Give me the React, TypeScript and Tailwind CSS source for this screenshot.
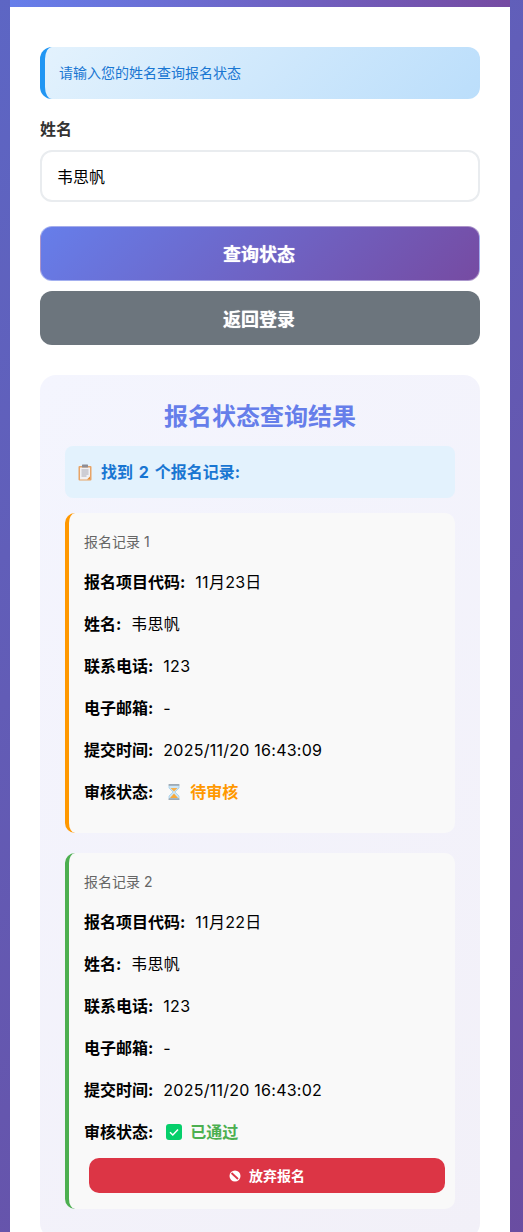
const font = "[font-family:'Inter','Noto_Sans_CJK_SC',sans-serif]";

function Clipboard() {
  return (
    <svg width="16" height="17" viewBox="0 0 16 17" className="shrink-0">
      <rect x="1.5" y="2" width="13" height="14.5" rx="1" fill="#e8a467" />
      <path d="M3 3.5h10v12h-7.5L3 15.5z" fill="#f1f1f3" />
      <path d="M13 12.5v3h-3z" fill="#e58a2e" />
      <rect x="5" y="0.5" width="6" height="3" rx="0.5" fill="#8d8d95" />
      <path d="M4.5 6h7M4.5 8h7M4.5 10h7M4.5 12h5" stroke="#a9a9b4" strokeWidth="1" />
    </svg>
  );
}

function Hourglass() {
  return (
    <svg width="16" height="18" viewBox="0 0 16 18" className="shrink-0">
      <path d="M3 2.5h10v2.5L9 9l4 4v2.5H3V13l4-4-4-4z" fill="#cde6f7" stroke="#a6cfe8" strokeWidth="0.8" />
      <path d="M4.5 5h7L8 8.6z" fill="#f8b04a" />
      <path d="M8 10.5l4 4.5H4z" fill="#f7a93b" />
      <rect x="2.5" y="1" width="11" height="1.8" rx="0.6" fill="#9eaab5" />
      <rect x="2.5" y="15.2" width="11" height="1.8" rx="0.6" fill="#9eaab5" />
    </svg>
  );
}

function CheckBox() {
  return (
    <svg width="16" height="16" viewBox="0 0 16 16" className="shrink-0">
      <rect width="16" height="16" rx="3" fill="#06cf6b" />
      <path d="M4 8.3l2.8 2.7L12 5.6" fill="none" stroke="#fff" strokeWidth="1.5" />
    </svg>
  );
}

function NoEntry() {
  return (
    <svg width="12" height="12" viewBox="0 0 12 12" className="shrink-0">
      <circle cx="6" cy="6" r="5.5" fill="#fff" />
      <path d="M2.5 3l6.5 6" stroke="#dc3545" strokeWidth="1.8" />
    </svg>
  );
}

function Row({ label, children }: { label: string; children: React.ReactNode }) {
  return (
    <div className="h-[42px] flex items-center text-[16px] text-black">
      <span className="font-bold">{label}</span>
      <span className="ml-[10px] flex items-center tracking-[0.25px]">{children}</span>
    </div>
  );
}

function Common({ code, time, name }: { code: string; time: string; name: string }) {
  return (
    <>
      <Row label="报名项目代码:">{code}</Row>
      <Row label="姓名:">{name}</Row>
      <Row label="联系电话:">123</Row>
      <Row label="电子邮箱:">-</Row>
      <Row label="提交时间:">{time}</Row>
    </>
  );
}

export default function App() {
  return (
    <div className={`${font} min-h-[1300px] pl-[10px] bg-[linear-gradient(135deg,#5d66c4_0%,#6a4ca0_100%)]`}>
      <div className="w-[500px] bg-white">
        <div className="h-[7px] bg-[linear-gradient(90deg,#667eea,#764ba2)]" />
        <div className="px-[30px] pt-[40px] pb-[30px]">
          <div className="h-[52px] flex items-center pl-[15px] pb-[2px] rounded-[12px] border-l-[5px] border-[#2196f3] bg-[linear-gradient(135deg,#e3f2fd,#bbdefb)] text-[14px] text-[#1976d2]">
            <span className="-ml-[1px]">请输入您的姓名查询报名状态</span>
          </div>
          <div className="mt-[18px] h-[24px] flex items-center text-[16px] font-semibold leading-none text-[#333]">姓名</div>
          <input
            readOnly
            value="韦思帆"
            className="mt-[9px] block w-full h-[52px] px-[15px] rounded-[12px] border-2 border-[#e9ecef] bg-white text-[16px] text-black outline-none"
          />
          <button className="mt-[24px] block w-full h-[55px] pt-[2px] pr-[2px] rounded-[12px] border border-white/40 bg-[linear-gradient(135deg,#667eea,#764ba2)] text-[18px] font-bold text-white [text-shadow:0_0_1px_rgba(255,255,255,0.8)]">
            查询状态
          </button>
          <button className="mt-[10px] block w-full h-[54px] pt-[2px] pr-[2px] rounded-[12px] bg-[#6c757d] text-[18px] font-bold text-white [text-shadow:0_0_1px_rgba(255,255,255,0.8)]">
            返回登录
          </button>

          <div className="mt-[30px] rounded-[16px] px-[25px] pt-[25px] pb-[30px] bg-[linear-gradient(135deg,#f4f5fe,#f2f0f8)]">
            <h2 className="h-[34px] flex items-center justify-center text-[24px] font-bold text-[#667eea]">报名状态查询结果</h2>
            <div className="mt-[12px] h-[52px] flex items-center gap-[8px] pl-[12px] rounded-[8px] bg-[#e3f2fd] text-[16px] font-bold text-[#1976d2] [word-spacing:2px]">
              <Clipboard />
              <span>找到 2 个报名记录:</span>
            </div>

            <div className="mt-[15px] h-[320px] rounded-[10px] border-l-4 border-[#ff9800] bg-[#f9f9f9] pl-[15px] pr-[10px] pt-[16px]">
              <div className="h-[25px] flex items-center text-[14px] text-[#666]">报名记录 1</div>
              <div className="mt-[7px]">
                <Common code="11月23日" name="韦思帆" time="2025/11/20 16:43:09" />
                <div className="h-[42px] flex items-center text-[16px] text-black">
                  <span className="font-bold">审核状态:</span>
                  <span className="ml-[13px] flex items-center gap-[8px] font-bold text-[#ff9800]">
                    <Hourglass />
                    待审核
                  </span>
                </div>
              </div>
            </div>

            <div className="mt-[20px] h-[356px] rounded-[10px] border-l-4 border-[#4caf50] bg-[#f9f9f9] pl-[15px] pr-[10px] pt-[16px]">
              <div className="h-[25px] flex items-center text-[14px] text-[#666]">报名记录 2</div>
              <div className="mt-[7px]">
                <Common code="11月22日" name="韦思帆" time="2025/11/20 16:43:02" />
                <div className="h-[42px] flex items-center text-[16px] text-black">
                  <span className="font-bold">审核状态:</span>
                  <span className="ml-[13px] flex items-center gap-[8px] font-bold text-[#4caf50]">
                    <CheckBox />
                    已通过
                  </span>
                </div>
              </div>
              <button className="mt-[5px] ml-[5px] w-[356px] h-[35px] flex items-center justify-center gap-[8px] rounded-[10px] bg-[#dc3545] text-[14px] font-bold text-white">
                <NoEntry />
                放弃报名
              </button>
            </div>
          </div>
        </div>
      </div>
    </div>
  );
}
